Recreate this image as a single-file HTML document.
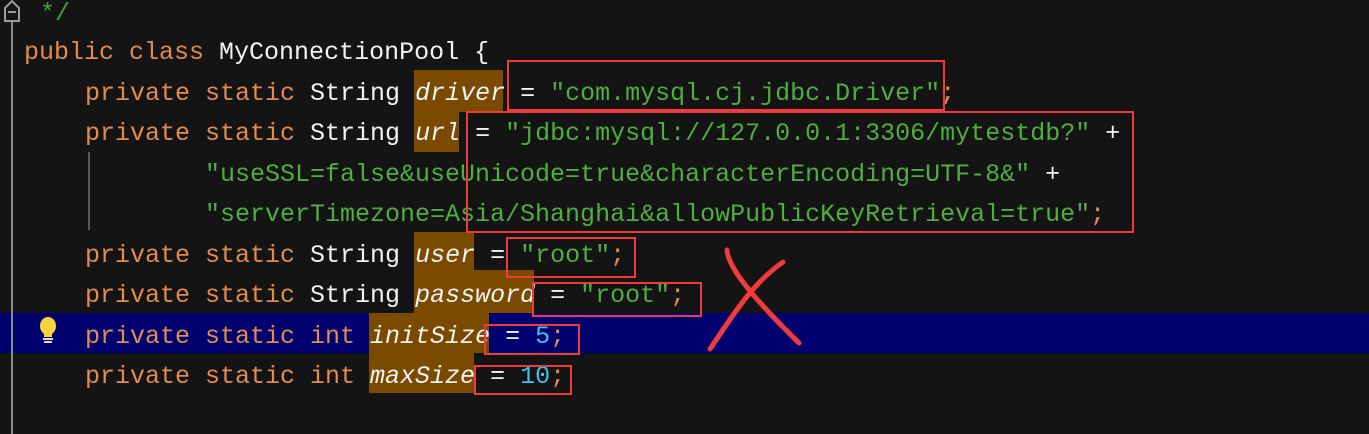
<!DOCTYPE html>
<html><head><meta charset="utf-8"><style>
html,body{margin:0;padding:0;}
body{width:1369px;height:434px;background:#141414;position:relative;overflow:hidden;font-family:"Liberation Mono",monospace;font-size:25px;}
.l{position:absolute;left:0;white-space:pre;height:40px;line-height:40px;}
.k{color:#e38b4f}.w{color:#f2f2f2}.s{color:#4fae3f}.n{color:#3fbfef}.c{color:#3fa33f}.i{font-style:italic;color:#f2f2f2}.o{color:#e38b4f}
.hl{position:absolute;background:#7a4a00}
.r{position:absolute;border:2px solid #ef3b3b;box-sizing:border-box}
</style></head><body>
<div style="position:absolute;left:0;top:313px;width:1369px;height:40px;background:#00006e"></div>
<div class="hl" style="left:414px;top:70px;width:89px;height:42px"></div>
<div class="hl" style="left:414px;top:112px;width:45px;height:40px"></div>
<div class="hl" style="left:414px;top:232px;width:60px;height:38px"></div>
<div class="hl" style="left:414px;top:270px;width:120px;height:43px"></div>
<div class="hl" style="left:369px;top:313px;width:120px;height:40px"></div>
<div class="hl" style="left:369px;top:353px;width:105px;height:40px"></div>
<div style="position:absolute;left:11px;top:20px;width:2px;height:414px;background:#8a8a8a"></div>
<svg style="position:absolute;left:3px;top:0" width="20" height="24"><path d="M2 8 L9 1 L16 8 L16 21 L2 21 Z" fill="#141414" stroke="#9a9a9a" stroke-width="2"/><path d="M5 12 H13" stroke="#9a9a9a" stroke-width="2"/></svg>
<div style="position:absolute;left:88px;top:152px;width:2px;height:78px;background:#5a5a5a"></div>
<div class="l" style="top:-6px;left:40px"><span class="c">*/</span></div>
<div class="l" style="top:33px;left:24px"><span class="k">public class </span><span class="w">MyConnectionPool {</span></div>
<div class="l" style="top:74px;left:85px"><span class="k">private static </span><span class="w">String </span><span class="i">driver</span><span class="w"> = </span><span class="s">"com.mysql.cj.jdbc.Driver"</span><span class="o">;</span></div>
<div class="l" style="top:114px;left:85px"><span class="k">private static </span><span class="w">String </span><span class="i">url</span><span class="w"> = </span><span class="s">"jdbc:mysql://127.0.0.1:3306/mytestdb?"</span><span class="w"> +</span></div>
<div class="l" style="top:155px;left:205px"><span class="s">"useSSL=false&amp;useUnicode=true&amp;characterEncoding=UTF-8&amp;"</span><span class="w"> +</span></div>
<div class="l" style="top:195px;left:205px"><span class="s">"serverTimezone=Asia/Shanghai&amp;allowPublicKeyRetrieval=true"</span><span class="o">;</span></div>
<div class="l" style="top:236px;left:85px"><span class="k">private static </span><span class="w">String </span><span class="i">user</span><span class="w"> = </span><span class="s">"root"</span><span class="o">;</span></div>
<div class="l" style="top:276px;left:85px"><span class="k">private static </span><span class="w">String </span><span class="i">password</span><span class="w"> = </span><span class="s">"root"</span><span class="o">;</span></div>
<div class="l" style="top:317px;left:85px"><span class="k">private static int </span><span class="i">initSize</span><span class="w"> = </span><span class="n">5</span><span class="o">;</span></div>
<div class="l" style="top:357px;left:85px"><span class="k">private static int </span><span class="i">maxSize</span><span class="w"> = </span><span class="n">10</span><span class="o">;</span></div>
<svg style="position:absolute;left:37px;top:316px" width="24" height="30"><ellipse cx="11" cy="10" rx="8" ry="9" fill="#f5d33a"/><rect x="7" y="17" width="8" height="4" fill="#f5d33a"/><rect x="6" y="22" width="10" height="2" fill="#ddd"/><rect x="7" y="25" width="8" height="2" fill="#ddd"/></svg>
<div class="r" style="left:507px;top:60px;width:438px;height:51px"></div>
<div class="r" style="left:466px;top:111px;width:668px;height:122px"></div>
<div class="r" style="left:506px;top:237px;width:130px;height:41px"></div>
<div class="r" style="left:532px;top:282px;width:170px;height:35px"></div>
<div class="r" style="left:484px;top:324px;width:96px;height:31px"></div>
<div class="r" style="left:474px;top:365px;width:98px;height:30px"></div>
<svg style="position:absolute;left:700px;top:240px" width="110" height="115"><path d="M27 10 C28 25 45 50 99 103" stroke="#ef3b3b" stroke-width="5" fill="none" stroke-linecap="round"/><path d="M10 109 C30 80 50 45 83 22" stroke="#ef3b3b" stroke-width="5" fill="none" stroke-linecap="round"/></svg>
</body></html>
